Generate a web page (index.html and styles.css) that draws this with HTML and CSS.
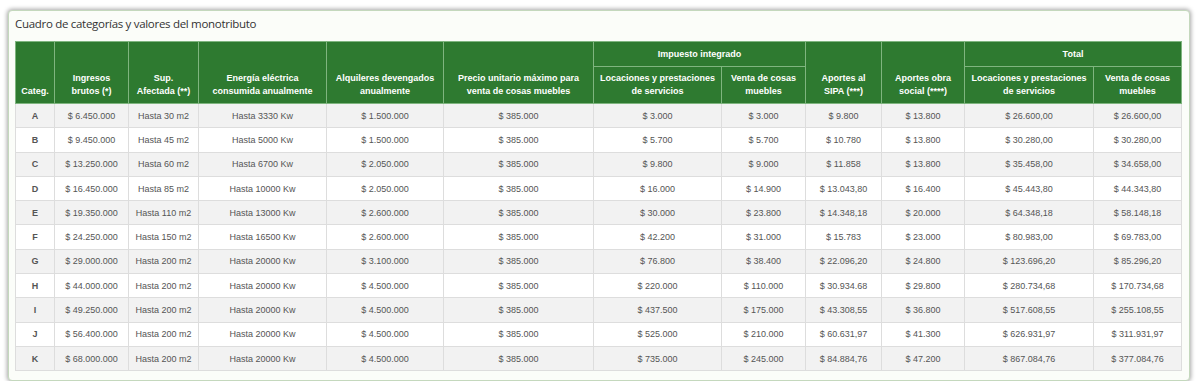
FILE: index.html
```html
<!DOCTYPE html>
<html lang="es">
<head>
<meta charset="utf-8">
<title>Monotributo</title>
<link rel="stylesheet" href="styles.css">
</head>
<body>
<div class="panel">
  <h1 class="title">Cuadro de categorías y valores del monotributo</h1>
  <table class="grid">
    <colgroup>
      <col style="width:39px"><col style="width:74px"><col style="width:70px"><col style="width:128px">
      <col style="width:117px"><col style="width:150px"><col style="width:128px"><col style="width:84px">
      <col style="width:76px"><col style="width:83px"><col style="width:129px"><col style="width:88px">
    </colgroup>
    <thead>
      <tr class="h1">
        <th rowspan="2">Categ.</th>
        <th rowspan="2">Ingresos<br>brutos (*)</th>
        <th rowspan="2">Sup.<br>Afectada (**)</th>
        <th rowspan="2">Energía eléctrica<br>consumida anualmente</th>
        <th rowspan="2">Alquileres devengados<br>anualmente</th>
        <th rowspan="2">Precio unitario máximo para<br>venta de cosas muebles</th>
        <th colspan="2" class="group">Impuesto integrado</th>
        <th rowspan="2">Aportes al<br>SIPA (***)</th>
        <th rowspan="2">Aportes obra<br>social (****)</th>
        <th colspan="2" class="group">Total</th>
      </tr>
      <tr class="h2">
        <th>Locaciones y prestaciones<br>de servicios</th>
        <th>Venta de cosas<br>muebles</th>
        <th>Locaciones y prestaciones<br>de servicios</th>
        <th>Venta de cosas<br>muebles</th>
      </tr>
    </thead>
    <tbody>
      <tr><td class="cat">A</td><td>$ 6.450.000</td><td>Hasta 30 m2</td><td>Hasta 3330 Kw</td><td>$ 1.500.000</td><td>$ 385.000</td><td>$ 3.000</td><td>$ 3.000</td><td>$ 9.800</td><td>$ 13.800</td><td>$ 26.600,00</td><td>$ 26.600,00</td></tr>
      <tr><td class="cat">B</td><td>$ 9.450.000</td><td>Hasta 45 m2</td><td>Hasta 5000 Kw</td><td>$ 1.500.000</td><td>$ 385.000</td><td>$ 5.700</td><td>$ 5.700</td><td>$ 10.780</td><td>$ 13.800</td><td>$ 30.280,00</td><td>$ 30.280,00</td></tr>
      <tr><td class="cat">C</td><td>$ 13.250.000</td><td>Hasta 60 m2</td><td>Hasta 6700 Kw</td><td>$ 2.050.000</td><td>$ 385.000</td><td>$ 9.800</td><td>$ 9.000</td><td>$ 11.858</td><td>$ 13.800</td><td>$ 35.458,00</td><td>$ 34.658,00</td></tr>
      <tr><td class="cat">D</td><td>$ 16.450.000</td><td>Hasta 85 m2</td><td>Hasta 10000 Kw</td><td>$ 2.050.000</td><td>$ 385.000</td><td>$ 16.000</td><td>$ 14.900</td><td>$ 13.043,80</td><td>$ 16.400</td><td>$ 45.443,80</td><td>$ 44.343,80</td></tr>
      <tr><td class="cat">E</td><td>$ 19.350.000</td><td>Hasta 110 m2</td><td>Hasta 13000 Kw</td><td>$ 2.600.000</td><td>$ 385.000</td><td>$ 30.000</td><td>$ 23.800</td><td>$ 14.348,18</td><td>$ 20.000</td><td>$ 64.348,18</td><td>$ 58.148,18</td></tr>
      <tr><td class="cat">F</td><td>$ 24.250.000</td><td>Hasta 150 m2</td><td>Hasta 16500 Kw</td><td>$ 2.600.000</td><td>$ 385.000</td><td>$ 42.200</td><td>$ 31.000</td><td>$ 15.783</td><td>$ 23.000</td><td>$ 80.983,00</td><td>$ 69.783,00</td></tr>
      <tr><td class="cat">G</td><td>$ 29.000.000</td><td>Hasta 200 m2</td><td>Hasta 20000 Kw</td><td>$ 3.100.000</td><td>$ 385.000</td><td>$ 76.800</td><td>$ 38.400</td><td>$ 22.096,20</td><td>$ 24.800</td><td>$ 123.696,20</td><td>$ 85.296,20</td></tr>
      <tr><td class="cat">H</td><td>$ 44.000.000</td><td>Hasta 200 m2</td><td>Hasta 20000 Kw</td><td>$ 4.500.000</td><td>$ 385.000</td><td>$ 220.000</td><td>$ 110.000</td><td>$ 30.934.68</td><td>$ 29.800</td><td>$ 280.734,68</td><td>$ 170.734,68</td></tr>
      <tr><td class="cat">I</td><td>$ 49.250.000</td><td>Hasta 200 m2</td><td>Hasta 20000 Kw</td><td>$ 4.500.000</td><td>$ 385.000</td><td>$ 437.500</td><td>$ 175.000</td><td>$ 43.308,55</td><td>$ 36.800</td><td>$ 517.608,55</td><td>$ 255.108,55</td></tr>
      <tr><td class="cat">J</td><td>$ 56.400.000</td><td>Hasta 200 m2</td><td>Hasta 20000 Kw</td><td>$ 4.500.000</td><td>$ 385.000</td><td>$ 525.000</td><td>$ 210.000</td><td>$ 60.631,97</td><td>$ 41.300</td><td>$ 626.931,97</td><td>$ 311.931,97</td></tr>
      <tr><td class="cat">K</td><td>$ 68.000.000</td><td>Hasta 200 m2</td><td>Hasta 20000 Kw</td><td>$ 4.500.000</td><td>$ 385.000</td><td>$ 735.000</td><td>$ 245.000</td><td>$ 84.884,76</td><td>$ 47.200</td><td>$ 867.084,76</td><td>$ 377.084,76</td></tr>
    </tbody>
  </table>
</div>
</body>
</html>
```

FILE: styles.css
```css
html, body {
  margin: 0;
  padding: 0;
  background: #ffffff;
}

body {
  padding: 10px 10px 0 8px;
}

.panel {
  width: 1182px;
  box-sizing: border-box;
  height: 371px;
  background: #fbfdf9;
  border: 1px solid #c4d8bd;
  border-radius: 4px;
  box-shadow: 0 0 4px 1px rgba(0, 0, 0, 0.35);
  padding: 0 8px 0 6px;
}

.title {
  margin: 0;
  height: 30px;
  box-sizing: border-box;
  padding-bottom: 5px;
  display: flex;
  align-items: center;
  font-family: "Open Sans", "Noto Sans", sans-serif;
  font-weight: normal;
  font-size: 11.5px;
  letter-spacing: -0.3px;
  color: #333333;
}

.grid {
  border-collapse: collapse;
  table-layout: fixed;
  width: 1166px;
  font-family: "Liberation Sans", Arial, sans-serif;
  font-size: 9px;
  color: #555555;
}

.grid th {
  background: #2e7a30;
  color: #ffffff;
  font-weight: bold;
  line-height: 13px;
  border: 1px solid #7fb57f;
  text-align: center;
  vertical-align: bottom;
  padding: 0 4px 5px;
}

.grid .h1 th.group {
  vertical-align: middle;
  padding: 0 4px;
}

.grid .h1 {
  height: 25px;
}

.grid .h2 {
  height: 37px;
}

.grid td {
  height: 23.3px;
  padding: 0 4px;
  text-align: center;
  vertical-align: middle;
  border: 1px solid #dddddd;
  white-space: nowrap;
}

.grid tbody tr:nth-child(odd) td {
  background: #f2f2f2;
}

.grid tbody tr:nth-child(even) td {
  background: #ffffff;
}

.grid td.cat {
  font-weight: bold;
  color: #555555;
}
```
